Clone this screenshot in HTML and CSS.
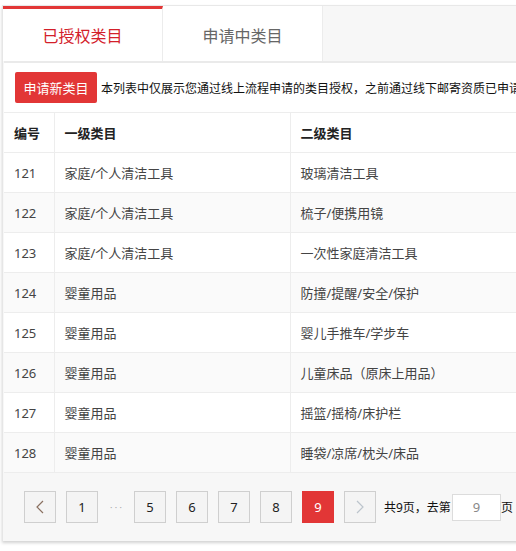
FILE: index.html
```html
<!DOCTYPE html>
<html lang="zh">
<head>
<meta charset="utf-8">
<link rel="stylesheet" href="styles.css">
</head>
<body>
<div class="panel">
  <div class="tabs">
    <div class="tab active">已授权类目</div>
    <div class="tab">申请中类目</div>
  </div>
  <div class="content">
    <div class="notice">
      <button class="btn-apply">申请新类目</button>
      <span class="notice-text">本列表中仅展示您通过线上流程申请的类目授权，之前通过线下邮寄资质已申请的类目授权不在此列表中展示</span>
    </div>
    <table class="grid">
      <thead>
        <tr><th class="c1">编号</th><th class="c2">一级类目</th><th class="c3">二级类目</th></tr>
      </thead>
      <tbody>
        <tr><td>121</td><td>家庭/个人清洁工具</td><td>玻璃清洁工具</td></tr>
        <tr><td>122</td><td>家庭/个人清洁工具</td><td>梳子/便携用镜</td></tr>
        <tr><td>123</td><td>家庭/个人清洁工具</td><td>一次性家庭清洁工具</td></tr>
        <tr><td>124</td><td>婴童用品</td><td>防撞/提醒/安全/保护</td></tr>
        <tr><td>125</td><td>婴童用品</td><td>婴儿手推车/学步车</td></tr>
        <tr><td>126</td><td>婴童用品</td><td>儿童床品（原床上用品）</td></tr>
        <tr><td>127</td><td>婴童用品</td><td>摇篮/摇椅/床护栏</td></tr>
        <tr><td>128</td><td>婴童用品</td><td>睡袋/凉席/枕头/床品</td></tr>
      </tbody>
    </table>
  </div>
  <div class="pager">
    <a class="pg arrow"><svg width="8" height="14" viewBox="0 0 8 14"><path d="M7 1 L1 7 L7 13" fill="none" stroke="#8a7060" stroke-width="1.2"/></svg></a>
    <a class="pg">1</a>
    <span class="dots">· · ·</span>
    <a class="pg">5</a>
    <a class="pg">6</a>
    <a class="pg">7</a>
    <a class="pg">8</a>
    <a class="pg current">9</a>
    <a class="pg arrow disabled"><svg width="8" height="14" viewBox="0 0 8 14"><path d="M1 1 L7 7 L1 13" fill="none" stroke="#bcc4cc" stroke-width="1.2"/></svg></a>
    <span class="total">共9页，去第</span>
    <span class="goto">9</span>
    <span class="total">页</span>
  </div>
</div>
</body>
</html>
```
FILE: styles.css
```css
html, body {
  margin: 0;
  padding: 0;
  overflow: hidden;
  background: #ffffff;
}
body {
  font-family: "Noto Sans", "Noto Sans CJK SC", sans-serif;
  color: #333;
  width: 516px;
  height: 551px;
}
.panel {
  margin: 5px 0 0 2px;
  width: 780px;
  background: #f7f7f7;
  border-top: 1px solid #e8e8e8;
  border-left: 1px solid #e6e6e6;
  box-shadow: 0 2px 3px rgba(0, 0, 0, 0.18);
}
.tabs {
  display: flex;
  height: 55px;
}
.tab {
  width: 160px;
  box-sizing: border-box;
  background: #fff;
  display: flex;
  align-items: center;
  justify-content: center;
  font-size: 16px;
  color: #666;
  border-right: 1px solid #ececec;
  padding-top: 3px;
}
.tab.active {
  color: #d3202a;
  border-top: 3px solid #e23636;
  border-right: 1px solid #ececec;
  padding-top: 0;
}
.content {
  margin-left: 1px;
  background: #fff;
  border-top: 2px solid #eaeaea;
}
.notice {
  display: flex;
  align-items: center;
  height: 49px;
  padding-left: 11px;
  white-space: nowrap;
}
.btn-apply {
  width: 82px;
  height: 31px;
  border: none;
  border-radius: 2px;
  background: #e23636;
  color: #fff;
  font-family: inherit;
  font-size: 13px;
  padding: 0;
  margin-right: 4px;
}
.notice-text {
  font-size: 12px;
  color: #111;
}
.grid {
  border-collapse: collapse;
  width: 100%;
  font-size: 13px;
  table-layout: fixed;
}
.grid th, .grid td {
  height: 40px;
  padding: 0 0 0 10px;
  box-sizing: border-box;
  text-align: left;
  border-top: 1px solid #ededed;
  border-right: 1px solid #ededed;
  white-space: nowrap;
}
.grid th {
  font-weight: 600;
  color: #222;
}
.grid td {
  color: #444;
}
.grid .c1 { width: 50px; }
.grid .c2 { width: 236px; }
.grid tbody tr:nth-child(even) td {
  background: #fafafa;
}
.grid tbody tr:last-child td {
  border-bottom: 1px solid #ededed;
}
.pager {
  display: flex;
  align-items: center;
  height: 68px;
  padding-left: 21px;
  white-space: nowrap;
}
.pg {
  width: 32px;
  height: 32px;
  flex: none;
  box-sizing: border-box;
  border: 1px solid #cfcfcf;
  background: #f4f4f4;
  display: flex;
  align-items: center;
  justify-content: center;
  font-size: 13px;
  color: #222;
  margin-right: 10px;
}
.pg.current {
  background: #e23636;
  border-color: #e23636;
  color: #fff;
}
.dots {
  width: 16px;
  flex: none;
  margin-right: 10px;
  text-align: center;
  color: #aaa;
  font-size: 9px;
  letter-spacing: 0;
}
.total {
  font-size: 12px;
  color: #111;
  margin-left: -2px;
}
.goto {
  width: 49px;
  height: 27px;
  flex: none;
  box-sizing: border-box;
  border: 1px solid #dcdcdc;
  background: #fff;
  display: flex;
  align-items: center;
  justify-content: center;
  font-size: 13px;
  color: #888;
  margin: 0 2px 0 1px;
}
```
